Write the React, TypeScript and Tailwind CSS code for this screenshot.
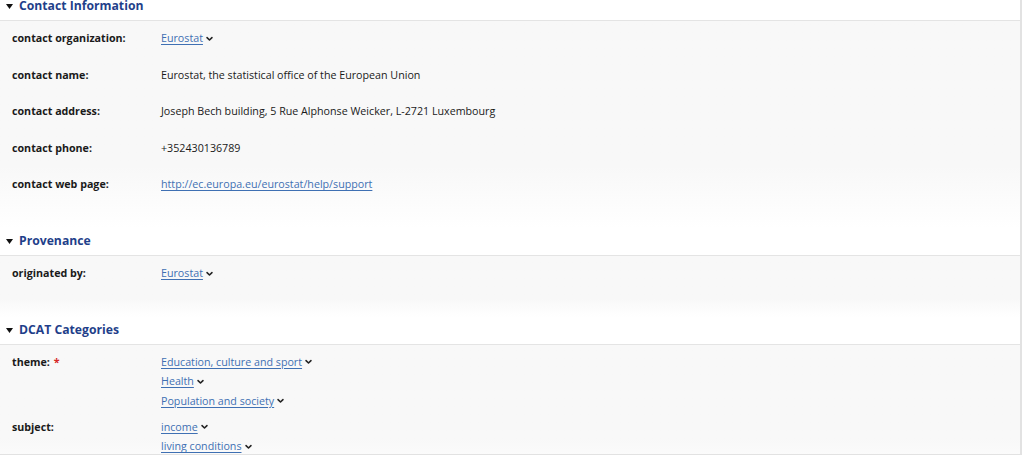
import React from 'react';

type Value = { text: string; link?: boolean; menu?: boolean };
type Row = { label: string; required?: boolean; values: Value[] };
type Section = { title: string; rows: Row[] };

const sections: Section[] = [
  {
    title: 'Contact Information',
    rows: [
      { label: 'contact organization:', values: [{ text: 'Eurostat', link: true, menu: true }] },
      { label: 'contact name:', values: [{ text: 'Eurostat, the statistical office of the European Union' }] },
      { label: 'contact address:', values: [{ text: 'Joseph Bech building, 5 Rue Alphonse Weicker, L-2721 Luxembourg' }] },
      { label: 'contact phone:', values: [{ text: '+352430136789' }] },
      { label: 'contact web page:', values: [{ text: 'http://ec.europa.eu/eurostat/help/support', link: true }] },
    ],
  },
  {
    title: 'Provenance',
    rows: [{ label: 'originated by:', values: [{ text: 'Eurostat', link: true, menu: true }] }],
  },
  {
    title: 'DCAT Categories',
    rows: [
      {
        label: 'theme:',
        required: true,
        values: [
          { text: 'Education, culture and sport', link: true, menu: true },
          { text: 'Health', link: true, menu: true },
          { text: 'Population and society', link: true, menu: true },
        ],
      },
      {
        label: 'subject:',
        values: [
          { text: 'income', link: true, menu: true },
          { text: 'living conditions', link: true, menu: true },
        ],
      },
    ],
  },
];

function Chevron() {
  return (
    <svg className="ml-[3px] inline-block h-[6px] w-[7px]" viewBox="0 0 10 7" fill="none">
      <path d="M1.5 1.5 5 5l3.5-3.5" stroke="#222" strokeWidth="2.2" strokeLinecap="round" strokeLinejoin="round" />
    </svg>
  );
}

function Caret() {
  return (
    <svg className="mr-[6px] h-[5px] w-[7px]" viewBox="0 0 7 5">
      <path d="M0 0h7L3.5 5z" fill="#111" />
    </svg>
  );
}

export default function App() {
  return (
    <div
      className="h-[455px] w-[1022px] overflow-hidden border-r-2 border-b border-[#e2e2e2] bg-white text-[10.7px] text-[#1a1a1a]"
      style={{ fontFamily: '"Open Sans", "Noto Sans", sans-serif' }}
    >
      <div className="-mt-[7px]">
        {sections.map((s) => (
          <section key={s.title}>
            <div className="flex h-[28px] items-center border-b border-[#e4e4e4] pl-[6px]">
              <Caret />
              <h2 className="text-[12.2px] font-bold text-[#1f3f8a]">{s.title}</h2>
            </div>
            <div className="bg-gradient-to-b from-[#f8f8f8] from-[70%] to-white px-[12px] pt-[8px] pb-[16px]">
              {s.rows.map((r) => (
                <div key={r.label} className="mb-[6.6px] flex min-h-[30px]">
                  <div className="w-[149px] shrink-0 font-bold leading-[19.5px]">
                    {r.label}
                    {r.required && <span className="ml-[4px] text-[#d62828]">*</span>}
                  </div>
                  <div className="flex flex-col">
                    {r.values.map((v) => (
                      <div key={v.text} className="flex items-center leading-[19.5px]">
                        {v.link ? (
                          <a href="#" className="text-[#3f70b3] underline underline-offset-[2px]">
                            {v.text}
                          </a>
                        ) : (
                          <span>{v.text}</span>
                        )}
                        {v.menu && <Chevron />}
                      </div>
                    ))}
                  </div>
                </div>
              ))}
            </div>
          </section>
        ))}
      </div>
    </div>
  );
}
